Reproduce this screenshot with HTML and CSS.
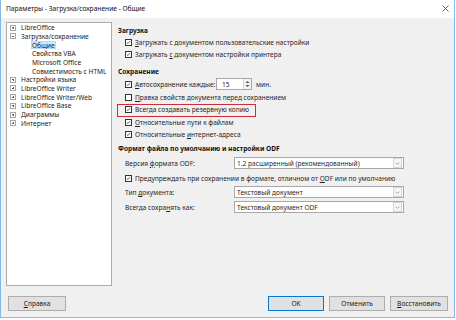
FILE: index.html
```html
<!DOCTYPE html>
<html lang="ru">
<head>
<meta charset="utf-8">
<title>Параметры</title>
<link rel="stylesheet" href="styles.css">
</head>
<body>
<div class="window">
  <div class="titlebar">
    <span class="title">Параметры - Загрузка/сохранение - Общие</span>
    <svg class="close" width="7" height="7" viewBox="0 0 7 7"><path d="M0.5 0.5L6.5 6.5M6.5 0.5L0.5 6.5" stroke="#444" stroke-width="0.8" fill="none"/></svg>
  </div>
  <div class="body">
    <div class="main">
      <div class="tree">
        <div class="node"><span class="exp plus"></span>LibreOffice</div>
        <div class="node"><span class="exp"></span>Загрузка/сохранение</div>
        <div class="node child"><span class="sel">Общие</span></div>
        <div class="node child"><span class="lbl">Свойства VBA</span></div>
        <div class="node child"><span class="lbl">Microsoft Office</span></div>
        <div class="node child"><span class="lbl">Совместимость с HTML</span></div>
        <div class="node"><span class="exp plus"></span>Настройки языка</div>
        <div class="node"><span class="exp plus"></span>LibreOffice Writer</div>
        <div class="node"><span class="exp plus"></span>LibreOffice Writer/Web</div>
        <div class="node"><span class="exp plus"></span>LibreOffice Base</div>
        <div class="node"><span class="exp plus"></span>Диаграммы</div>
        <div class="node"><span class="exp plus"></span>Интернет</div>
      </div>
      <div class="panel">
        <div class="head first">Загрузка</div>
        <div class="row"><span class="cb on"><svg viewBox="0 0 7 7"><path d="M1.2 3.5L2.7 5L5.6 1.6"/></svg></span><span><u>З</u>агружать с документом пользовательские настройки</span></div>
        <div class="row"><span class="cb on"><svg viewBox="0 0 7 7"><path d="M1.2 3.5L2.7 5L5.6 1.6"/></svg></span><span>Загружать <u>с</u> документом настройки принтера</span></div>
        <div class="head second">Сохранение</div>
        <div class="row spinrow"><span class="cb on"><svg viewBox="0 0 7 7"><path d="M1.2 3.5L2.7 5L5.6 1.6"/></svg></span><span class="spinlbl"><u>А</u>втосохранение каждые:</span>
          <span class="spin"><span class="spinval">15</span><span class="spinbtn"><svg viewBox="0 0 7 10"><path d="M1.5 4L3.5 2L5.5 4Z M1.5 6L3.5 8L5.5 6Z"/></svg></span></span>
          <span class="unit">мин.</span></div>
        <div class="row r125"><span class="cb"></span><span><u>П</u>равка свойств документа перед сохранением</span></div>
        <div class="row r125"><span class="cb on"><svg viewBox="0 0 7 7"><path d="M1.2 3.5L2.7 5L5.6 1.6"/></svg></span><span>Всегда создавать резервную копию</span></div>
        <div class="row r125"><span class="cb on"><svg viewBox="0 0 7 7"><path d="M1.2 3.5L2.7 5L5.6 1.6"/></svg></span><span><u>О</u>тносительные пути к файлам</span></div>
        <div class="row r125"><span class="cb on"><svg viewBox="0 0 7 7"><path d="M1.2 3.5L2.7 5L5.6 1.6"/></svg></span><span>Относительные <u>и</u>нтернет-адреса</span></div>
        <div class="head third">Формат файла по умолчанию и настройки ODF</div>
        <div class="selrow s1"><span class="slbl">Версия <u>ф</u>ормата ODF:</span><span class="select"><span class="stext">1.2 расширенный (рекомендованный)</span><span class="sarrow"><svg viewBox="0 0 8 8"><path d="M2 3L4 5L6 3"/></svg></span></span></div>
        <div class="row warnrow"><span class="cb on"><svg viewBox="0 0 7 7"><path d="M1.2 3.5L2.7 5L5.6 1.6"/></svg></span><span>Предупреждать при сохранении в формате, отличном от <u>O</u>DF или по умолчанию</span></div>
        <div class="selrow"><span class="slbl">Тип <u>д</u>окумента:</span><span class="select"><span class="stext">Текстовый документ</span><span class="sarrow"><svg viewBox="0 0 8 8"><path d="M2 3L4 5L6 3"/></svg></span></span></div>
        <div class="selrow s3"><span class="slbl">Всегда сохра<u>н</u>ять как:</span><span class="select"><span class="stext">Текстовый документ ODF</span><span class="sarrow"><svg viewBox="0 0 8 8"><path d="M2 3L4 5L6 3"/></svg></span></span></div>
        <div class="mark"></div>
      </div>
    </div>
    <div class="footer">
      <span class="btn help"><u>С</u>правка</span>
      <span class="spacer"></span>
      <span class="btn ok">OK</span>
      <span class="btn">Отменить</span>
      <span class="btn wide"><u>В</u>осстановить</span>
    </div>
  </div>
</div>
</body>
</html>
```

FILE: styles.css
```css
* { box-sizing: border-box; }
html, body { margin: 0; padding: 0; background: #ffffff; }
body {
  font-family: "Noto Sans", "Open Sans", sans-serif;
  font-size: 6.6px;
  color: #1f1f1f;
}
u { text-decoration-thickness: 0.5px; text-underline-offset: 1px; }

.window {
  width: 455px;
  height: 318px;
  border: 1px solid #86b9e2;
  border-top: none;
  display: flex;
  flex-direction: column;
  background: #f0f0f0;
}
.titlebar {
  height: 18px;
  flex: none;
  background: #ffffff;
  display: flex;
  align-items: center;
  justify-content: space-between;
  padding: 0 5px 1px 5px;
}
.title { font-size: 6.65px; color: #111; }
.close { width: 7px; height: 7px; }

.body {
  flex: 1;
  display: flex;
  flex-direction: column;
  padding: 4px 5px 5px 5px;
}
.main { display: flex; gap: 6px; height: 264px; flex: none; }

.tree {
  width: 106px;
  height: 264px;
  background: #ffffff;
  border: 1px solid #ababab;
  padding-top: 0.3px;
}
.node {
  height: 8.7px;
  display: flex;
  align-items: center;
  padding-left: 3px;
  white-space: nowrap;
  color: #1a1a1a;
}
.exp {
  width: 6px;
  height: 6px;
  border: 1px solid #a5a5a5;
  margin-right: 5px;
  flex: none;
  background: linear-gradient(#555, #555) center / 2px 1px no-repeat;
}
.exp.plus {
  background:
    linear-gradient(#555, #555) center / 2px 1px no-repeat,
    linear-gradient(#555, #555) center / 1px 2px no-repeat;
}
.node.child { padding-left: 24px; }
.sel {
  height: 8.7px;
  display: flex;
  align-items: center;
  padding: 0 1px;
  background: #cce8ff;
  box-shadow: inset 0 0 0 0.5px #99d1ff;
}
.lbl { padding: 0 1px; }

.panel {
  flex: 1;
  position: relative;
  display: flex;
  flex-direction: column;
}
.head {
  height: 12px;
  display: flex;
  align-items: center;
  font-weight: 700;
  color: #111;
  white-space: nowrap;
}
.head.first { margin-top: 2px; }
.head.second { margin-top: 5px; }
.head.third { margin-top: 1.5px; }

.row {
  height: 12px;
  display: flex;
  align-items: center;
  padding-left: 7px;
  white-space: nowrap;
}
.row.r125 { height: 12.5px; }
.spinrow { height: 14px; }
.warnrow { height: 13px; margin-top: 2px; }

.cb {
  width: 7px;
  height: 7px;
  border: 1px solid #333;
  background: #fff;
  margin-right: 3px;
  flex: none;
  display: flex;
}
.cb svg { width: 5px; height: 5px; }
.cb svg path { fill: none; stroke: #222; stroke-width: 1; }

.spinlbl { width: 81px; }
.spin {
  width: 36px;
  height: 12px;
  background: #fff;
  border: 1px solid #a8a8a8;
  display: flex;
  align-items: center;
  justify-content: space-between;
  padding-left: 5px;
}
.spinbtn {
  width: 8px;
  height: 10px;
  display: flex;
  background: #f2f2f2;
  border-left: 1px solid #d4d4d4;
}
.spinbtn svg { width: 7px; height: 10px; }
.spinbtn path { fill: #555; }
.unit { margin-left: 4px; }

.selrow {
  height: 14px;
  display: flex;
  align-items: center;
  padding-left: 7px;
  white-space: nowrap;
}
.selrow.s1 { margin-top: 1.5px; }
.selrow.s3 { margin-top: 1px; }
.slbl { width: 109px; flex: none; }
.select {
  width: 170px;
  height: 12px;
  background: #fff;
  border: 1px solid #a8a8a8;
  display: flex;
  align-items: center;
  justify-content: space-between;
  padding-left: 2px;
}
.sarrow {
  width: 9px;
  height: 10px;
  margin-right: 1px;
  border: 1px solid #d6d6d6;
  background: #f6f6f6;
  display: flex;
  align-items: center;
  justify-content: center;
}
.sarrow svg { width: 7px; height: 7px; }
.sarrow path { fill: none; stroke: #8a8a8a; stroke-width: 0.9; }

.mark {
  position: absolute;
  left: -1px;
  top: 81.5px;
  width: 139px;
  height: 13px;
  border: 1.5px solid #cc2d3a;
}

.footer {
  display: flex;
  align-items: center;
  gap: 5px;
  margin-top: 10px;
  padding: 0 1px 0 2px;
  height: 15px;
}
.spacer { flex: 1; }
.btn {
  width: 56px;
  height: 15px;
  background: #e1e1e1;
  border: 1px solid #adadad;
  display: flex;
  align-items: center;
  justify-content: center;
  color: #1a1a1a;
}
.btn.help, .btn.wide { width: 58px; }
.btn.ok { border-color: #0078d7; }
```
